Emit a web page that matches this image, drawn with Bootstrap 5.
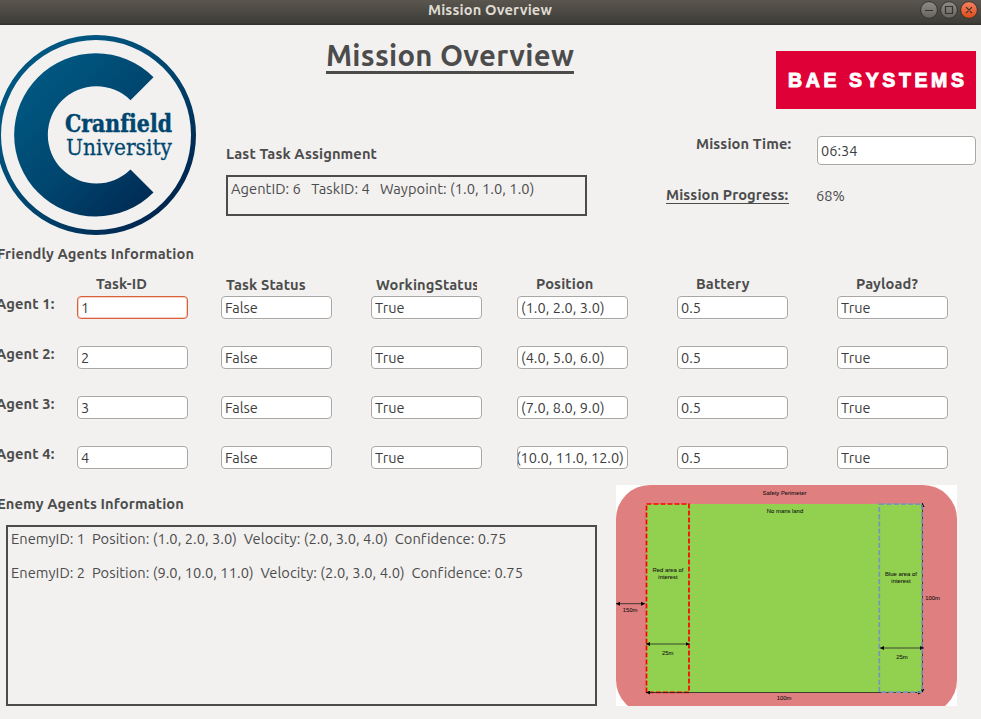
<!DOCTYPE html>
<html lang="en">
<head>
<meta charset="utf-8">
<meta name="viewport" content="width=device-width, initial-scale=1">
<title>Mission Overview</title>
<link href="https://cdn.jsdelivr.net/npm/bootstrap@5.3.0/dist/css/bootstrap.min.css" rel="stylesheet">
<style>
  body { background: #f2f1f0; color: #4c4c4c; font: 14.667px/20px Ubuntu, "Noto Sans", sans-serif; letter-spacing: .045px; width: 981px; height: 719px; }
  .titlebar { height: 25px; background: linear-gradient(#5a564f, #3e3d38 92%, #33322e 96%); color: #dfdbd2; display: grid; grid-template-columns: 1fr auto 1fr; line-height: 20px; }
  .lbl { font-weight: 700; font-size: 14.667px; line-height: 20px; letter-spacing: .11px; white-space: nowrap; }
  .titlebar .caption { letter-spacing: .14px; margin-left: -1px; }
  .section-title { margin: 0 0 0 -3px; }
  .page-title { font-size: 29.333px; font-weight: 700; line-height: 36px; letter-spacing: .27px; border-bottom: 3px solid #4c4c4c; white-space: nowrap; margin: 13px 0 70px 100px; width: 248px; height: 36px; }
  .logo-area { width: 226px; padding-top: 10px; }
  .center-area { width: 440px; }
  .upper { height: 219px; }
  .outline-box { border: 2px solid #4c4c4c; padding: 2px 3px; white-space: pre; }
  .task-box { width: 361px; height: 41px; margin-top: 11px; }
  .enemy-box { width: 591px; height: 181px; margin: 11px 0 0 6px; display: grid; align-content: start; gap: 14px; }
  .field, .field:focus { border: 1px solid #aaa7a2; border-radius: 4px; background: #fff; color: #3c3c3c; height: 23px; padding: 0 4px 0 3px; font: inherit; font-size: 14.5px; line-height: 21px; letter-spacing: .06px; box-shadow: 0 0 0 1px rgba(255,255,255,.25); }
  .field.active { border-color: #d9603b; box-shadow: inset 0 0 0 1px #f5cfc3; }
  .field.overflowing { padding: 0; text-indent: -2px; letter-spacing: .03px; }
  .field.time-field { width: 159px; height: 29px; }
  .brand-banner { margin: 26px 0 27px 110px; letter-spacing: 0; }
  .time-name { width: 151px; padding-left: 30px; margin-top: -2px; }
  .agents { display: grid; grid-template-columns: 77px 144px 150px 146px 160px 160px 144px; grid-template-rows: 22px repeat(4, 50px); margin-top: 10px; }
  .agents .field { width: 111px; }
  .agents .head { padding-left: 19px; }
  .agents .head-near { padding: 1px 0 0 5px; overflow: hidden; width: 106px; }
  .row-name { margin: -2px 0 0 -4px; }
  .progress-name { border-bottom: 1px solid #4c4c4c; width: 123px; height: 19px; }
  .progress-value { margin: 1px 0 0 27px; }
  .progress-line { margin-top: 20px; }
  .enemy-area { margin-top: -2px; }
  .field-map { margin: -11px 0 0 19px; letter-spacing: 0; }
</style>
</head>
<body class="overflow-hidden">
<header class="titlebar">
  <span></span>
  <span class="lbl caption">Mission Overview</span>
  <svg class="ms-auto" width="62" height="20" viewBox="0 0 62 20">
    <defs>
      <linearGradient id="gray" x2="0" y2="1"><stop stop-color="#8f8c84"/><stop offset="1" stop-color="#65635d"/></linearGradient>
      <linearGradient id="orange" x2="0" y2="1"><stop stop-color="#f58263"/><stop offset="1" stop-color="#dd4b16"/></linearGradient>
    </defs>
    <g stroke="#33322e" stroke-width="1">
      <circle cx="10" cy="10" r="8.4" fill="url(#gray)"/>
      <circle cx="30" cy="10" r="8.4" fill="url(#gray)"/>
      <circle cx="50" cy="10" r="8.4" fill="url(#orange)"/>
      <path d="M6 10.500h8M26.500 6.500h7v7h-7zM47 7.200l6 6M53 7.200l-6 6" fill="none" stroke-width="1.2"/>
    </g>
  </svg>
</header>

<main>
  <section class="upper d-flex">
    <div class="logo-area">
      <svg width="197" height="200" viewBox="0 35 197 200" class="d-block" role="img" aria-label="Cranfield University">
        <defs>
          <linearGradient id="navy" gradientUnits="userSpaceOnUse" x1="40" y1="80" x2="165" y2="205"><stop stop-color="#005680"/><stop offset=".45" stop-color="#00466f"/><stop offset="1" stop-color="#002750"/></linearGradient>
        </defs>
        <circle cx="96" cy="135" r="97.500" fill="none" stroke="url(#navy)" stroke-width="5"/>
        <path d="M153.500 77.200A81.600 81.600 0 1 0 153.500 192.500L130.500 169.500A48.600 48.600 0 1 1 130.500 100.200Z" fill="url(#navy)"/>
        <g fill="#00466f" stroke="#00466f" font-family="'DejaVu Serif', serif">
          <text x="65" y="132.300" font-size="23.500" font-weight="700" stroke-width=".5" textLength="107" lengthAdjust="spacingAndGlyphs">Cranfield</text>
          <text x="66" y="155" font-size="23" stroke-width=".3" textLength="106" lengthAdjust="spacingAndGlyphs">University</text>
        </g>
      </svg>
    </div>
    <div class="center-area d-flex flex-column">
      <h1 class="page-title">Mission Overview</h1>
      <div class="lbl">Last Task Assignment</div>
      <div class="outline-box task-box">AgentID: 6   TaskID: 4   Waypoint: (1.0, 1.0, 1.0)</div>
    </div>
    <div class="flex-grow-1">
      <svg width="200" height="58" class="brand-banner d-block">
        <rect width="200" height="58" fill="#df0038"/>
        <text x="12" y="36.300" fill="#fff" stroke="#fff" stroke-width="1" font-family="'Liberation Sans', Arial, sans-serif" font-weight="700" font-size="19.500" textLength="176">BAE SYSTEMS</text>
      </svg>
      <div class="d-flex">
        <span class="lbl time-name">Mission Time:</span>
        <input class="form-control field time-field" value="06:34" aria-label="Mission time">
      </div>
      <div class="d-flex progress-line">
        <div class="lbl progress-name">Mission Progress:</div>
        <span class="progress-value">68%</span>
      </div>
    </div>
  </section>

  <h2 class="lbl section-title">Friendly Agents Information</h2>

  <section class="agents">
    <span></span>
    <span class="lbl head">Task-ID</span>
    <span class="lbl head-near">Task Status</span>
    <span class="lbl head-near">WorkingStatus</span>
    <span class="lbl head">Position</span>
    <span class="lbl head">Battery</span>
    <span class="lbl head">Payload?</span>

    <span class="lbl row-name">Agent 1:</span>
    <input class="form-control field active" value="1"><input class="form-control field" value="False"><input class="form-control field" value="True"><input class="form-control field" value="(1.0, 2.0, 3.0)"><input class="form-control field" value="0.5"><input class="form-control field" value="True">
    <span class="lbl row-name">Agent 2:</span>
    <input class="form-control field" value="2"><input class="form-control field" value="False"><input class="form-control field" value="True"><input class="form-control field" value="(4.0, 5.0, 6.0)"><input class="form-control field" value="0.5"><input class="form-control field" value="True">
    <span class="lbl row-name">Agent 3:</span>
    <input class="form-control field" value="3"><input class="form-control field" value="False"><input class="form-control field" value="True"><input class="form-control field" value="(7.0, 8.0, 9.0)"><input class="form-control field" value="0.5"><input class="form-control field" value="True">
    <span class="lbl row-name">Agent 4:</span>
    <input class="form-control field" value="4"><input class="form-control field" value="False"><input class="form-control field" value="True"><input class="form-control field overflowing" value="(10.0, 11.0, 12.0)"><input class="form-control field" value="0.5"><input class="form-control field" value="True">
  </section>

  <section class="d-flex">
    <div class="enemy-area">
      <h2 class="lbl section-title">Enemy Agents Information</h2>
      <div class="outline-box enemy-box"><div>EnemyID: 1  Position: (1.0, 2.0, 3.0)  Velocity: (2.0, 3.0, 4.0)  Confidence: 0.75</div><div>EnemyID: 2  Position: (9.0, 10.0, 11.0)  Velocity: (2.0, 3.0, 4.0)  Confidence: 0.75</div></div>
    </div>
    <svg class="field-map" width="341" height="221" viewBox="0 0 341 221">
      <defs>
        <marker id="tip" viewBox="0 0 4 4" refX="4" refY="2" markerWidth="4" markerHeight="4" markerUnits="userSpaceOnUse" orient="auto-start-reverse"><path d="M0 0L4 2L0 4z"/></marker>
      </defs>
      <rect width="341" height="221" fill="#fff"/>
      <rect width="341" height="229" rx="34" fill="#df7f7f"/>
      <rect x="30" y="19" width="276" height="188.500" fill="#92d050"/>
      <rect x="30.500" y="19" width="42.500" height="188.300" fill="none" stroke="#f00" stroke-width="1.7" stroke-dasharray="5 2"/>
      <g stroke="#222" stroke-width=".8">
        <path d="M0 118.700H29" marker-start="url(#tip)" marker-end="url(#tip)"/>
        <path d="M30 159H73.500" marker-start="url(#tip)" marker-end="url(#tip)"/>
        <path d="M264 163H308" marker-start="url(#tip)" marker-end="url(#tip)"/>
        <path d="M306.500 18V207.500" marker-start="url(#tip)" marker-end="url(#tip)"/>
        <path d="M30 207.500H306" marker-start="url(#tip)" marker-end="url(#tip)"/>
      </g>
      <rect x="263.300" y="19.200" width="42.700" height="188" fill="none" stroke="#7a94b8" stroke-width="1.7" stroke-dasharray="5 2.200"/>
      <g font-family="'Liberation Sans', Arial, sans-serif" font-size="5.900" text-anchor="middle" fill="#111" stroke="#111" stroke-width=".06">
        <text x="168.500" y="10.200">Safety Perimeter</text>
        <text x="169" y="28">No mans land</text>
        <text x="52" y="87.300">Red area of</text>
        <text x="52" y="94.300">interest</text>
        <text x="285" y="91.300">Blue area of</text>
        <text x="285" y="98.300">interest</text>
        <text x="14" y="126.500">150m</text>
        <text x="51.700" y="170">25m</text>
        <text x="286" y="174">25m</text>
        <text x="316.500" y="115">100m</text>
        <text x="168" y="215.300">100m</text>
      </g>
    </svg>
  </section>
</main>
<script src="https://cdn.jsdelivr.net/npm/bootstrap@5.3.0/dist/js/bootstrap.bundle.min.js"></script>
</body>
</html>
